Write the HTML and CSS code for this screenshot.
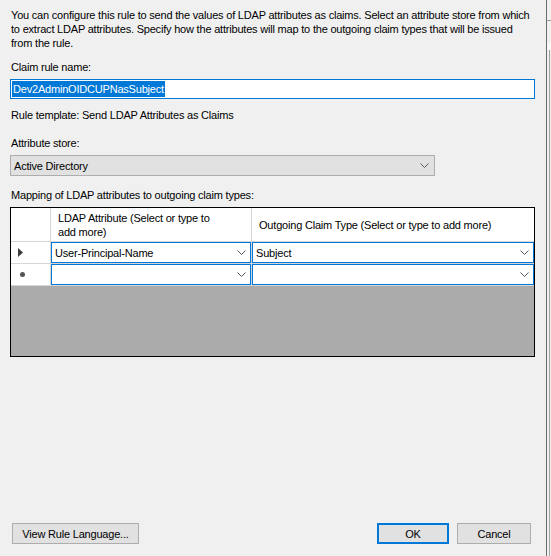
FILE: index.html
```html
<!DOCTYPE html>
<html lang="en">
<head>
<meta charset="utf-8">
<title>Edit Rule</title>
<link rel="stylesheet" href="styles.css">
</head>
<body>
<div class="window">
  <div class="dialog">
    <p class="intro">You can configure this rule to send the values of LDAP attributes as claims. Select an attribute store from which to extract LDAP attributes. Specify how the attributes will map to the outgoing claim types that will be issued from the rule.</p>

    <label class="label first">Claim rule name:</label>
    <div class="textbox"><span class="selected">Dev2AdminOIDCUPNasSubject</span></div>

    <p class="label template">Rule template: Send LDAP Attributes as Claims</p>

    <label class="label store">Attribute store:</label>
    <div class="dropdown">
      <span>Active Directory</span>
      <svg class="chevron" width="9" height="5" viewBox="0 0 9 5"><path d="M0.5 0.5 L4.5 4.5 L8.5 0.5" fill="none" stroke="#5a5a5a" stroke-width="1"/></svg>
    </div>

    <p class="label mapping">Mapping of LDAP attributes to outgoing claim types:</p>
    <div class="grid">
      <div class="corner"></div>
      <div class="colhead two-line">LDAP Attribute (Select or type to add more)</div>
      <div class="colhead last">Outgoing Claim Type (Select or type to add more)</div>

      <div class="rowhead"><svg width="5" height="9" viewBox="0 0 5 9"><path d="M0 0 L5 4.5 L0 9 Z" fill="#3c3c3c"/></svg></div>
      <div class="cell"><div class="combo"><span>User-Principal-Name</span><svg class="chevron" width="9" height="5" viewBox="0 0 9 5"><path d="M0.5 0.5 L4.5 4.5 L8.5 0.5" fill="none" stroke="#5a5a5a" stroke-width="1"/></svg></div></div>
      <div class="cell last"><div class="combo"><span>Subject</span><svg class="chevron" width="9" height="5" viewBox="0 0 9 5"><path d="M0.5 0.5 L4.5 4.5 L8.5 0.5" fill="none" stroke="#5a5a5a" stroke-width="1"/></svg></div></div>

      <div class="rowhead"><span class="newrow"></span></div>
      <div class="cell"><div class="combo"><span></span><svg class="chevron" width="9" height="5" viewBox="0 0 9 5"><path d="M0.5 0.5 L4.5 4.5 L8.5 0.5" fill="none" stroke="#5a5a5a" stroke-width="1"/></svg></div></div>
      <div class="cell last"><div class="combo"><span></span><svg class="chevron" width="9" height="5" viewBox="0 0 9 5"><path d="M0.5 0.5 L4.5 4.5 L8.5 0.5" fill="none" stroke="#5a5a5a" stroke-width="1"/></svg></div></div>

      <div class="empty"></div>
    </div>

    <div class="buttons">
      <button class="btn rule">View Rule Language...</button>
      <span class="spacer"></span>
      <button class="btn ok">OK</button>
      <button class="btn cancel">Cancel</button>
    </div>
  </div>
  <div class="edge">
    <div class="edge-top"></div>
    <div class="edge-band"></div>
    <div class="edge-rest"></div>
  </div>
</div>
</body>
</html>
```

FILE: styles.css
```css
html, body {
  margin: 0;
  padding: 0;
  background: #f0f0f0;
}

body {
  font-family: "Liberation Sans", Arial, sans-serif;
  font-size: 11px;
  letter-spacing: -0.2px;
  color: #000;
}

.window {
  display: flex;
  width: 551px;
  height: 556px;
  overflow: hidden;
}

.dialog {
  width: 547px;
  flex: none;
  border-right: 1px solid #6a6a6a;
  box-sizing: border-box;
  display: flex;
  flex-direction: column;
  padding: 8px 0 12px 10px;
}

.intro {
  margin: 0 0 0 1px;
  line-height: 14px;
  width: 524px;
}

.label {
  display: block;
  margin: 0 0 0 1px;
  line-height: 14px;
}

.label.first { margin-top: 10px; }
.label.template { margin-top: 9px; }
.label.store { margin-top: 14px; }
.label.mapping { margin-top: 12px; }

.textbox {
  margin-top: 5px;
  width: 525px;
  height: 20px;
  box-sizing: border-box;
  border: 1px solid #0078d7;
  background: #fff;
  padding: 1px 1px;
}

.selected {
  display: inline-block;
  background: #0078d7;
  color: #fff;
  line-height: 16px;
  height: 16px;
  padding: 0 1px 0 1px;
}

.dropdown {
  margin-top: 5px;
  width: 425px;
  height: 21px;
  box-sizing: border-box;
  border: 1px solid #adadad;
  background: #e1e1e1;
  display: flex;
  align-items: center;
  justify-content: space-between;
  padding: 0 5px 0 3px;
}

.chevron { display: block; flex: none; }

.grid {
  margin-top: 5px;
  width: 525px;
  height: 150px;
  box-sizing: border-box;
  border: 1px solid #000;
  background: #ababab;
  display: grid;
  grid-template-columns: 40px 201px 1fr;
  grid-template-rows: 34px 22px 22px 1fr;
}

.corner, .colhead, .rowhead {
  background: #fff;
  border-right: 1px solid #d6d6d6;
  border-bottom: 1px solid #d6d6d6;
  box-sizing: border-box;
}

.colhead {
  display: flex;
  align-items: center;
  padding: 0 6px 0 7px;
  line-height: 14px;
}

.colhead.two-line { padding-right: 30px; }

.colhead.last, .cell.last { border-right: none; }

.rowhead {
  display: flex;
  align-items: center;
  padding-left: 7px;
}

.newrow {
  display: block;
  width: 5px;
  height: 5px;
  margin-left: 2px;
  border-radius: 50%;
  background: #555;
}

.cell {
  background: #fff;
  border-right: 1px solid #d6d6d6;
  border-bottom: 1px solid #d6d6d6;
  box-sizing: border-box;
}

.combo {
  height: 21px;
  box-sizing: border-box;
  border: 1px solid #0078d7;
  display: flex;
  align-items: center;
  justify-content: space-between;
  padding: 0 4px 0 3px;
}

.empty {
  grid-column: 1 / -1;
}

.buttons {
  margin-top: auto;
  display: flex;
  align-items: center;
  padding-left: 2px;
  padding-right: 15px;
}

.spacer { flex: 1; }

.btn {
  font: inherit;
  letter-spacing: inherit;
  color: #000;
  height: 21px;
  box-sizing: border-box;
  background: #e1e1e1;
  border: 1px solid #adadad;
  border-radius: 0;
  padding: 0;
  margin: 0;
}

.btn.rule { width: 127px; }
.btn.ok { width: 72px; border: 2px solid #0078d7; }
.btn.cancel { width: 74px; margin-left: 8px; }

.edge {
  flex: 1;
  display: flex;
  flex-direction: column;
  background: #f0f0f0;
}

.edge-top {
  height: 20px;
  border-bottom: 1px solid #a0a0a0;
}

.edge-band {
  margin-top: 22px;
  height: 7px;
  background: #f8f8f8;
}

.edge-rest {
  flex: 1;
  margin-left: 2px;
  border-left: 1px solid #a0a0a0;
}
```
